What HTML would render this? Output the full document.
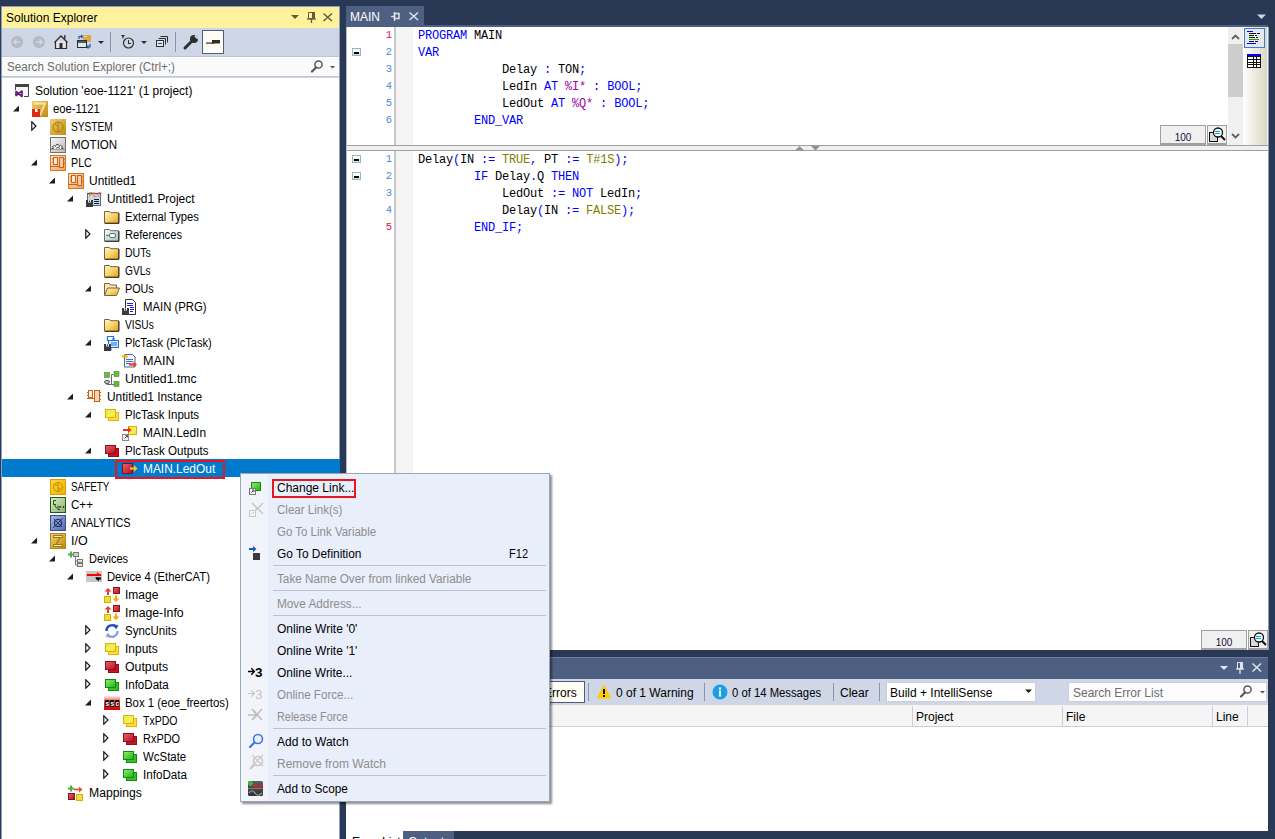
<!DOCTYPE html><html><head><meta charset="utf-8"><style>
*{margin:0;padding:0;box-sizing:border-box}
html,body{width:1275px;height:839px;overflow:hidden;background:#293955;font-family:"Liberation Sans",sans-serif;font-size:12px;color:#000}
div,svg{position:absolute}
.t{white-space:pre;line-height:18px;height:18px}
.m{font-family:"Liberation Mono",monospace;font-size:12px;letter-spacing:-0.2px;white-space:pre;line-height:17px;height:17px}
.ln{font-family:"Liberation Sans",sans-serif;font-size:11px;white-space:pre;line-height:17px;height:17px}
</style></head><body>
<div style="position:absolute;left:1px;top:6px;width:339px;height:833px;background:#8F9DBA"></div>
<div style="position:absolute;left:2px;top:7px;width:337px;height:21px;background:#FFF29D"></div>
<div class="t" style="left:6px;top:9px">Solution Explorer</div>
<div style="position:absolute;left:2px;top:28px;width:337px;height:28px;background:#CFD6E5"></div>
<div style="position:absolute;left:2px;top:56px;width:337px;height:22px;background:#CFD6E5"></div>
<div style="position:absolute;left:2px;top:56px;width:337px;height:1px;background:#BDC4D2"></div>
<div style="position:absolute;left:2px;top:57px;width:337px;height:19px;background:#FAFAFA;border-top:1px solid #FFFFFF"></div>
<div style="position:absolute;left:2px;top:76px;width:337px;height:1px;background:#BDC4D2"></div>
<div class="t" style="left:7px;top:58px;color:#6D6D6D;transform:scaleX(0.97);transform-origin:0 0">Search Solution Explorer (Ctrl+;)</div>
<div style="position:absolute;left:2px;top:78px;width:337px;height:761px;background:#FFFFFF"></div>
<svg style="left:285px;top:8px" width="55" height="20" viewBox="0 0 55 20"><path d="M6 7h8l-4 4z" fill="#6A5A32"/><path d="M23.5 4.5h6v6h-6z" fill="none" stroke="#6A5A32" stroke-width="1"/><rect x="27" y="4" width="2.5" height="7" fill="#6A5A32"/><path d="M22 11h9" stroke="#6A5A32" stroke-width="1.3"/><path d="M26.5 11v4" stroke="#6A5A32" stroke-width="1.3"/><path d="M38.5 5.5l8.5 7.5M47 5.5l-8.5 7.5" stroke="#6A5A32" stroke-width="1.5"/></svg>
<svg style="left:2px;top:28px" width="337" height="28" viewBox="2 28 337 28"><circle cx="17" cy="42" r="6" fill="#B4BAC5"/><path d="M20 42h-6M16.5 39.5L14 42l2.5 2.5" stroke="#CFD6E5" stroke-width="1.6" fill="none"/><circle cx="39" cy="42" r="6" fill="#B4BAC5"/><path d="M36 42h6M39.5 39.5L42 42l-2.5 2.5" stroke="#CFD6E5" stroke-width="1.6" fill="none"/><path d="M55.5 41.5v7h11v-7" stroke="#2D2D2D" stroke-width="1.2" fill="#E4E4EC"/><path d="M54.5 42.5l6.5-6.5 6.5 6.5" stroke="#2D2D2D" stroke-width="1.4" fill="none"/><rect x="59.5" y="43" width="3" height="5.5" fill="#2D2D2D"/><path d="M64.8 35v4" stroke="#2D2D2D" stroke-width="1.3"/><rect x="83" y="35" width="8" height="7" fill="#DCA84A"/><rect x="84" y="36" width="3" height="1" fill="#F0D8A0"/><rect x="77.5" y="40.5" width="9" height="7" fill="#E0E4EE" stroke="#2D2D2D"/><path d="M77.5 42h9" stroke="#2D2D2D" stroke-width="1.5"/><path d="M79 39v-2.5h3M81 35l1.5 1.5L81 38" stroke="#1E5BAA" stroke-width="1.2" fill="none"/><path d="M90 44v3h-3M88.5 45.5L87 47l1.5 1.5" stroke="#1E5BAA" stroke-width="1.2" fill="none"/><path d="M98 41h6l-3 3z" fill="#1E2D4A"/><rect x="110" y="32" width="1" height="20" fill="#8A93A8"/><circle cx="128.5" cy="43" r="5" fill="none" stroke="#2D2D2D" stroke-width="1.2"/><path d="M128.5 40v3.5h2.5" stroke="#2D2D2D" stroke-width="1.1" fill="none"/><path d="M121 35h4l-2 2.5z" fill="#2D2D2D"/><path d="M123 36.5v2" stroke="#2D2D2D"/><path d="M141 41h6l-3 3z" fill="#1E2D4A"/><rect x="156.5" y="40.5" width="7" height="6" fill="#E8E8EE" stroke="#2D2D2D"/><path d="M158.5 38.5h7v6M160.5 36.5h7v6" stroke="#2D2D2D" fill="none"/><path d="M158 43.5h4" stroke="#1E5BAA" stroke-width="1.2"/><rect x="175" y="32" width="1" height="20" fill="#8A93A8"/><path d="M185 48l7-7" stroke="#2D2D2D" stroke-width="3" stroke-linecap="round"/><circle cx="194" cy="39" r="4" fill="#2D2D2D"/><path d="M195 35.5l3 3" stroke="#CFD6E5" stroke-width="2.2"/><rect x="202.5" y="30.5" width="21" height="23" fill="#FFFCF4" stroke="#4B5E80"/><rect x="212" y="40" width="8" height="3.5" fill="#2D2D2D"/><rect x="206" y="42.5" width="8" height="1.2" fill="#2D2D2D"/></svg>
<svg style="left:308px;top:58px" width="30" height="18" viewBox="0 0 30 18"><circle cx="10.5" cy="6.5" r="3.6" fill="none" stroke="#555" stroke-width="1.5"/><path d="M8 9.5l-4 4" stroke="#555" stroke-width="2.2" stroke-linecap="round"/><path d="M22 8h5l-2.5 2.5z" fill="#555"/></svg>
<svg width="0" height="0" style="left:0;top:0"><defs><linearGradient id="gfold" x1="0" y1="0" x2="1" y2="1"><stop offset="0" stop-color="#FFF6C8"/><stop offset="0.5" stop-color="#F8D46A"/><stop offset="1" stop-color="#E0A020"/></linearGradient><linearGradient id="ggold" x1="0" y1="0" x2="1" y2="1"><stop offset="0" stop-color="#F0D070"/><stop offset="1" stop-color="#C08A10"/></linearGradient><linearGradient id="ggray" x1="0" y1="0" x2="1" y2="1"><stop offset="0" stop-color="#FAFAFA"/><stop offset="1" stop-color="#B8B8B8"/></linearGradient><linearGradient id="gorange" x1="0" y1="0" x2="1" y2="1"><stop offset="0" stop-color="#FCE6CC"/><stop offset="1" stop-color="#EFA060"/></linearGradient><linearGradient id="gyel" x1="0" y1="0" x2="1" y2="1"><stop offset="0" stop-color="#D8F030"/><stop offset="0.6" stop-color="#F4F060"/><stop offset="1" stop-color="#F8D840"/></linearGradient><linearGradient id="gred" x1="0" y1="0" x2="1" y2="1"><stop offset="0" stop-color="#F06070"/><stop offset="1" stop-color="#B01020"/></linearGradient><linearGradient id="ggreen" x1="0" y1="0" x2="1" y2="1"><stop offset="0" stop-color="#90F070"/><stop offset="1" stop-color="#20B010"/></linearGradient><linearGradient id="gcpp" x1="0" y1="0" x2="1" y2="1"><stop offset="0" stop-color="#E0ECC0"/><stop offset="1" stop-color="#90B070"/></linearGradient><linearGradient id="gana" x1="0" y1="0" x2="1" y2="1"><stop offset="0" stop-color="#A8B8E8"/><stop offset="1" stop-color="#5068B0"/></linearGradient><linearGradient id="gsafe" x1="0" y1="0" x2="1" y2="1"><stop offset="0" stop-color="#FFD840"/><stop offset="1" stop-color="#F0B000"/></linearGradient><linearGradient id="gscope" x1="0" y1="0" x2="0" y2="1"><stop offset="0" stop-color="#606060"/><stop offset="1" stop-color="#303030"/></linearGradient></defs></svg>
<div style="left:15px;top:83px;width:16px;height:16px"><svg width="16" height="16" viewBox="0 0 16 16"><rect x="0" y="1" width="14" height="3" fill="#424242"/><rect x="1" y="4" width="12" height="9" fill="#F6F6F6"/><path d="M0.5 4v3M13.5 4v9.5H9" stroke="#424242" fill="none"/><path d="M1 8.5L7 13.5V8L1 12.5Z" fill="none" stroke="#68217A" stroke-width="1.7" stroke-linejoin="round"/></svg></div>
<div class="t" style="left:35px;top:82px;color:#000;transform:scaleX(0.993);transform-origin:0 0">Solution 'eoe-1121' (1 project)</div>
<svg style="left:13px;top:105px" width="7" height="7" viewBox="0 0 7 7"><path d="M6 0.5V6.5H0z" fill="#1E1E1E"/></svg>
<div style="left:32px;top:101px;width:16px;height:16px"><svg width="16" height="16" viewBox="0 0 16 16"><rect x="0" y="0" width="16" height="16" fill="url(#ggold)"/><path d="M2 2.5h11l-5 12" fill="none" stroke="#F6E6A8" stroke-width="1.8"/><rect x="0" y="8" width="8" height="8" fill="#E02A10"/><rect x="3" y="8" width="2.5" height="3" fill="#FFF"/></svg></div>
<div class="t" style="left:53px;top:100px;color:#000;transform:scaleX(0.94);transform-origin:0 0">eoe-1121</div>
<svg style="left:31px;top:121px" width="6" height="10" viewBox="0 0 6 10"><path d="M0.75 0.75L5 5L0.75 9.25z" fill="#fff" stroke="#1E1E1E" stroke-width="1.2"/></svg>
<div style="left:50px;top:119px;width:16px;height:16px"><svg width="16" height="16" viewBox="0 0 16 16"><rect x="0" y="0" width="16" height="16" fill="url(#ggold)"/><circle cx="8" cy="8" r="5" fill="none" stroke="#A87A10" stroke-width="1"/><path d="M8 3v10M5 5l2 2" stroke="#A87A10"/></svg></div>
<div class="t" style="left:71px;top:118px;color:#000;transform:scaleX(0.847);transform-origin:0 0">SYSTEM</div>
<div style="left:50px;top:137px;width:16px;height:16px"><svg width="16" height="16" viewBox="0 0 16 16"><rect x="0.5" y="0.5" width="15" height="15" fill="url(#ggray)" stroke="#707070"/><path d="M1.5 11.5h2l-1-2 2-1 1 1 1-2h2l1 2 1-1 2 1-1 2h2" fill="#F4F4F4" stroke="#404040" stroke-width="0.9"/><path d="M6.5 11.5a1.5 1.2 0 0 1 3 0" fill="none" stroke="#404040" stroke-width="0.9"/><path d="M1 12.5h14" stroke="#A0A0A0"/></svg></div>
<div class="t" style="left:71px;top:136px;color:#000;transform:scaleX(0.962);transform-origin:0 0">MOTION</div>
<svg style="left:31px;top:159px" width="7" height="7" viewBox="0 0 7 7"><path d="M6 0.5V6.5H0z" fill="#1E1E1E"/></svg>
<div style="left:50px;top:155px;width:16px;height:16px"><svg width="16" height="16" viewBox="0 0 16 16"><rect x="0" y="0" width="16" height="16" fill="#D9731C"/><rect x="1" y="1" width="14" height="14" fill="url(#gorange)"/><rect x="3.5" y="2.5" width="4" height="7" fill="#FCEBD8" stroke="#C8641A"/><rect x="9.5" y="2.5" width="4" height="10" fill="#F6C89A" stroke="#C8641A"/><path d="M1 11.5h8" stroke="#C8641A"/><path d="M2 4h1M2 7h1M14 4h1M14 8h1" stroke="#C8641A"/></svg></div>
<div class="t" style="left:71px;top:154px;color:#000;transform:scaleX(0.891);transform-origin:0 0">PLC</div>
<svg style="left:49px;top:177px" width="7" height="7" viewBox="0 0 7 7"><path d="M6 0.5V6.5H0z" fill="#1E1E1E"/></svg>
<div style="left:68px;top:173px;width:16px;height:16px"><svg width="16" height="16" viewBox="0 0 16 16"><rect x="0" y="0" width="16" height="16" fill="#D9731C"/><rect x="1" y="1" width="14" height="14" fill="url(#gorange)"/><rect x="3.5" y="2.5" width="4" height="7" fill="#FCEBD8" stroke="#C8641A"/><rect x="9.5" y="2.5" width="4" height="10" fill="#F6C89A" stroke="#C8641A"/><path d="M1 11.5h8" stroke="#C8641A"/><path d="M2 4h1M2 7h1M14 4h1M14 8h1" stroke="#C8641A"/></svg></div>
<div class="t" style="left:89px;top:172px;color:#000;transform:scaleX(0.998);transform-origin:0 0">Untitled1</div>
<svg style="left:67px;top:195px" width="7" height="7" viewBox="0 0 7 7"><path d="M6 0.5V6.5H0z" fill="#1E1E1E"/></svg>
<div style="left:86px;top:191px;width:16px;height:16px"><svg width="16" height="16" viewBox="0 0 16 16"><rect x="1.5" y="2.5" width="13" height="12" fill="#C8D8F0" stroke="#4A6A9A"/><path d="M1.5 2.5h13" stroke="#2040E0" stroke-width="1.2"/><text x="3" y="5.5" font-size="6.5" font-family="Liberation Sans" font-weight="bold" fill="#F08A00">PLC</text><path d="M8 8.5h5M8 10.5h5M8 12.5h5" stroke="#1A1A1A" stroke-width="1.1"/><rect x="0" y="9" width="7" height="7" fill="#3A3A3A"/><rect x="2" y="9" width="3" height="2.5" fill="#E8E8E8"/><rect x="3" y="9.5" width="1" height="1.5" fill="#3A3A3A"/></svg></div>
<div class="t" style="left:107px;top:190px;color:#000;transform:scaleX(0.994);transform-origin:0 0">Untitled1 Project</div>
<div style="left:104px;top:209px;width:16px;height:16px"><svg width="16" height="16" viewBox="0 0 16 16"><path d="M0.5 2.5h5l1 1.2h8v10.5H0.5z" fill="url(#gfold)" stroke="#7A6040"/><path d="M15 4v10.3H1" stroke="#3A2A10" fill="none"/></svg></div>
<div class="t" style="left:125px;top:208px;color:#000;transform:scaleX(0.934);transform-origin:0 0">External Types</div>
<svg style="left:85px;top:229px" width="6" height="10" viewBox="0 0 6 10"><path d="M0.75 0.75L5 5L0.75 9.25z" fill="#fff" stroke="#1E1E1E" stroke-width="1.2"/></svg>
<div style="left:104px;top:227px;width:16px;height:16px"><svg width="16" height="16" viewBox="0 0 16 16"><path d="M0.5 2.5h5l1 1.2h8v10.5H0.5z" fill="url(#ggray)" stroke="#6A6A6A"/><path d="M15 4v10.3H1" stroke="#2A2A2A" fill="none"/><rect x="5.5" y="6.5" width="6" height="4" rx="1.5" fill="#fff" stroke="#3A7A8A"/><path d="M2 8.5h3.5" stroke="#3A9A8A" stroke-width="1.2"/></svg></div>
<div class="t" style="left:125px;top:226px;color:#000;transform:scaleX(0.928);transform-origin:0 0">References</div>
<div style="left:104px;top:245px;width:16px;height:16px"><svg width="16" height="16" viewBox="0 0 16 16"><path d="M0.5 2.5h5l1 1.2h8v10.5H0.5z" fill="url(#gfold)" stroke="#7A6040"/><path d="M15 4v10.3H1" stroke="#3A2A10" fill="none"/></svg></div>
<div class="t" style="left:125px;top:244px;color:#000;transform:scaleX(0.879);transform-origin:0 0">DUTs</div>
<div style="left:104px;top:263px;width:16px;height:16px"><svg width="16" height="16" viewBox="0 0 16 16"><path d="M0.5 2.5h5l1 1.2h8v10.5H0.5z" fill="url(#gfold)" stroke="#7A6040"/><path d="M15 4v10.3H1" stroke="#3A2A10" fill="none"/></svg></div>
<div class="t" style="left:125px;top:262px;color:#000;transform:scaleX(0.85);transform-origin:0 0">GVLs</div>
<svg style="left:85px;top:285px" width="7" height="7" viewBox="0 0 7 7"><path d="M6 0.5V6.5H0z" fill="#1E1E1E"/></svg>
<div style="left:104px;top:281px;width:16px;height:16px"><svg width="16" height="16" viewBox="0 0 16 16"><path d="M0.5 14V2.5h5l1 1.5h6v3" fill="#FCEAB0" stroke="#7A6040"/><path d="M0.5 14.5l3-7.5h12l-3 7.5z" fill="url(#gfold)" stroke="#7A6040"/></svg></div>
<div class="t" style="left:125px;top:280px;color:#000;transform:scaleX(0.897);transform-origin:0 0">POUs</div>
<div style="left:122px;top:299px;width:16px;height:16px"><svg width="16" height="16" viewBox="0 0 16 16"><path d="M3.5 0.5h7l3 3v12h-10z" fill="#fff" stroke="#333"/><g shape-rendering="crispEdges" fill="#1A1AF0"><rect x="5" y="4" width="6" height="1"/><rect x="5" y="6" width="6" height="1"/><rect x="8" y="8" width="4" height="1"/><rect x="8" y="10" width="4" height="1"/><rect x="8" y="12" width="3" height="1"/></g><rect x="0" y="9" width="7" height="7" fill="#3A3A3A"/><rect x="2" y="9" width="3" height="2.5" fill="#E8E8E8"/><rect x="3" y="9.5" width="1" height="1.5" fill="#3A3A3A"/></svg></div>
<div class="t" style="left:143px;top:298px;color:#000;transform:scaleX(0.945);transform-origin:0 0">MAIN (PRG)</div>
<div style="left:104px;top:317px;width:16px;height:16px"><svg width="16" height="16" viewBox="0 0 16 16"><path d="M0.5 2.5h5l1 1.2h8v10.5H0.5z" fill="url(#gfold)" stroke="#7A6040"/><path d="M15 4v10.3H1" stroke="#3A2A10" fill="none"/></svg></div>
<div class="t" style="left:125px;top:316px;color:#000;transform:scaleX(0.844);transform-origin:0 0">VISUs</div>
<svg style="left:85px;top:339px" width="7" height="7" viewBox="0 0 7 7"><path d="M6 0.5V6.5H0z" fill="#1E1E1E"/></svg>
<div style="left:104px;top:335px;width:16px;height:16px"><svg width="16" height="16" viewBox="0 0 16 16"><path d="M3.5 6V1.5h6v3" stroke="#1A70E0" stroke-width="1.2" fill="none"/><path d="M7.5 3.5l2 2 2-2" fill="#1A70E0"/><rect x="4.5" y="5.5" width="10" height="7" fill="#D8E8FF" stroke="#1A70E0"/><path d="M7 8h6M7 10h6" stroke="#1A70E0" stroke-width="1.1"/><path d="M7 12.5v3" stroke="#1A70E0"/><rect x="0" y="9" width="7" height="7" fill="#3A3A3A"/><rect x="2" y="9" width="3" height="2.5" fill="#E8E8E8"/><rect x="3" y="9.5" width="1" height="1.5" fill="#3A3A3A"/></svg></div>
<div class="t" style="left:125px;top:334px;color:#000;transform:scaleX(0.922);transform-origin:0 0">PlcTask (PlcTask)</div>
<div style="left:122px;top:353px;width:16px;height:16px"><svg width="16" height="16" viewBox="0 0 16 16"><path d="M2.5 1.5h8l2.5 2.5v10h-10.5z" fill="#F4F8FC" stroke="#4A6A8A"/><g shape-rendering="crispEdges" fill="#3A70D0"><rect x="4" y="6" width="7" height="1"/><rect x="4" y="8" width="7" height="1"/><rect x="4" y="10" width="5" height="1"/></g><path d="M0 3.5h4" stroke="#F5B800" stroke-width="2.2"/><path d="M3.5 1l2.5 2.5-2.5 2.5z" fill="#F5B800"/><path d="M7 11.5h5" stroke="#E84030" stroke-width="2.2"/><path d="M11.5 8.5l3.5 3-3.5 3z" fill="#E84030"/></svg></div>
<div class="t" style="left:143px;top:352px;color:#000;transform:scaleX(1.052);transform-origin:0 0">MAIN</div>
<div style="left:104px;top:371px;width:16px;height:16px"><svg width="16" height="16" viewBox="0 0 16 16"><rect x="0.5" y="1.5" width="5" height="5" fill="#6CB840" stroke="#4A8A2A" stroke-width="0.6"/><rect x="10" y="0.5" width="5" height="5" fill="#6CB840" stroke="#4A8A2A" stroke-width="0.6"/><rect x="10" y="10.5" width="5" height="5" fill="#6CB840" stroke="#4A8A2A" stroke-width="0.6"/><path d="M7.5 3.5h2M7.5 3.5v10h2.5M2.5 13.5h5" stroke="#6A6A6A" fill="none"/><ellipse cx="3" cy="11" rx="2.5" ry="1.5" fill="#ddd" stroke="#444"/></svg></div>
<div class="t" style="left:125px;top:370px;color:#000;transform:scaleX(1.024);transform-origin:0 0">Untitled1.tmc</div>
<svg style="left:67px;top:393px" width="7" height="7" viewBox="0 0 7 7"><path d="M6 0.5V6.5H0z" fill="#1E1E1E"/></svg>
<div style="left:86px;top:389px;width:16px;height:16px"><svg width="16" height="16" viewBox="0 0 16 16"><rect x="2.5" y="1.5" width="4" height="7" fill="#FCEEDC" stroke="#C8641A"/><rect x="8.5" y="1.5" width="5" height="11" fill="#F6D2B0" stroke="#C8641A"/><path d="M1 9.5h7.5M1 3.5h1.5M1 6.5h1.5M13.5 3.5h1.5M13.5 6.5h1.5M13.5 10.5h1.5" stroke="#C8641A"/></svg></div>
<div class="t" style="left:107px;top:388px;color:#000;transform:scaleX(0.99);transform-origin:0 0">Untitled1 Instance</div>
<svg style="left:85px;top:411px" width="7" height="7" viewBox="0 0 7 7"><path d="M6 0.5V6.5H0z" fill="#1E1E1E"/></svg>
<div style="left:104px;top:407px;width:16px;height:16px"><svg width="16" height="16" viewBox="0 0 16 16"><rect x="4.5" y="5.5" width="10" height="8" fill="#F8E040" stroke="#E8B000"/><rect x="1.5" y="2.5" width="10" height="8" fill="url(#gyel)" stroke="#E8B000"/></svg></div>
<div class="t" style="left:125px;top:406px;color:#000;transform:scaleX(0.958);transform-origin:0 0">PlcTask Inputs</div>
<div style="left:122px;top:425px;width:16px;height:16px"><svg width="16" height="16" viewBox="0 0 16 16"><rect x="6.5" y="1.5" width="8" height="8" fill="url(#gyel)" stroke="#E0B000"/><path d="M1 5h6" stroke="#F03020" stroke-width="2"/><path d="M6 2l3.5 3-3.5 3z" fill="#F03020"/><rect x="0.5" y="9.5" width="6" height="6" fill="#F4F4F4" stroke="#888"/><path d="M2.5 13.5l3-3M3.5 10.5h2v2" stroke="#555" fill="none"/></svg></div>
<div class="t" style="left:143px;top:424px;color:#000;transform:scaleX(0.995);transform-origin:0 0">MAIN.LedIn</div>
<svg style="left:85px;top:447px" width="7" height="7" viewBox="0 0 7 7"><path d="M6 0.5V6.5H0z" fill="#1E1E1E"/></svg>
<div style="left:104px;top:443px;width:16px;height:16px"><svg width="16" height="16" viewBox="0 0 16 16"><rect x="4.5" y="5.5" width="10" height="8" fill="#C81028" stroke="#901018"/><rect x="1.5" y="2.5" width="10" height="8" fill="url(#gred)" stroke="#901018"/></svg></div>
<div class="t" style="left:125px;top:442px;color:#000;transform:scaleX(0.964);transform-origin:0 0">PlcTask Outputs</div>
<div style="position:absolute;left:2px;top:459px;width:338px;height:18px;background:#007ACC"></div>
<div style="left:122px;top:461px;width:16px;height:16px"><svg width="16" height="16" viewBox="0 0 16 16"><rect x="0.5" y="2.5" width="10" height="10" fill="url(#gred)" stroke="#801018"/><path d="M8 7.5h5" stroke="#F8C020" stroke-width="2.2"/><path d="M12 4l3.5 3.5L12 11z" fill="#F8C020"/></svg></div>
<div class="t" style="left:143px;top:460px;color:#FFFFFF;transform:scaleX(0.993);transform-origin:0 0">MAIN.LedOut</div>
<div style="position:absolute;left:115px;top:460px;width:110px;height:19px;border:2px solid #E8161E"></div>
<div style="left:50px;top:479px;width:16px;height:16px"><svg width="16" height="16" viewBox="0 0 16 16"><rect x="0.5" y="0.5" width="15" height="15" fill="url(#gsafe)" stroke="#E09A00"/><circle cx="8" cy="8" r="4.5" fill="none" stroke="#C88A00" stroke-width="1"/><path d="M8 3.5v9M5 6h3M8 10h3" stroke="#C88A00"/></svg></div>
<div class="t" style="left:71px;top:478px;color:#000;transform:scaleX(0.823);transform-origin:0 0">SAFETY</div>
<div style="left:50px;top:497px;width:16px;height:16px"><svg width="16" height="16" viewBox="0 0 16 16"><rect x="0.5" y="0.5" width="15" height="15" fill="url(#gcpp)" stroke="#1A5A1A"/><path d="M6 3.5H3.5v4H6M4 7.5l3 4M9 10h2M10 9v2M12.5 10h2M13.5 9v2" stroke="#1A5A1A" fill="none"/><path d="M8 8.5v4h2" stroke="#1A5A1A" fill="none"/></svg></div>
<div class="t" style="left:71px;top:496px;color:#000;transform:scaleX(0.965);transform-origin:0 0">C++</div>
<div style="left:50px;top:515px;width:16px;height:16px"><svg width="16" height="16" viewBox="0 0 16 16"><rect x="0.5" y="0.5" width="15" height="15" fill="url(#gana)" stroke="#3A4A8A"/><circle cx="8" cy="8" r="3.5" fill="none" stroke="#1A2A5A" stroke-width="1.2"/><path d="M3 13l10-10M4 4l8 8" stroke="#1A2A5A" stroke-width="0.9"/></svg></div>
<div class="t" style="left:71px;top:514px;color:#000;transform:scaleX(0.906);transform-origin:0 0">ANALYTICS</div>
<svg style="left:31px;top:537px" width="7" height="7" viewBox="0 0 7 7"><path d="M6 0.5V6.5H0z" fill="#1E1E1E"/></svg>
<div style="left:50px;top:533px;width:16px;height:16px"><svg width="16" height="16" viewBox="0 0 16 16"><rect x="0.5" y="0.5" width="15" height="15" fill="url(#ggold)" stroke="#B08A20"/><rect x="3.5" y="2.5" width="9" height="2" fill="#F8E8B0" stroke="#A07A10"/><rect x="3.5" y="11.5" width="9" height="2" fill="#F8E8B0" stroke="#A07A10"/><path d="M10 5l-4 6" stroke="#A07A10" stroke-width="1.2"/></svg></div>
<div class="t" style="left:71px;top:532px;color:#000;transform:scaleX(1.037);transform-origin:0 0">I/O</div>
<svg style="left:49px;top:555px" width="7" height="7" viewBox="0 0 7 7"><path d="M6 0.5V6.5H0z" fill="#1E1E1E"/></svg>
<div style="left:68px;top:551px;width:16px;height:16px"><svg width="16" height="16" viewBox="0 0 16 16"><rect x="5.5" y="1.5" width="5" height="4" fill="#D0D0D0" stroke="#777"/><rect x="9.5" y="8.5" width="5" height="3" fill="#E0E0E0" stroke="#777"/><rect x="9.5" y="12.5" width="5" height="3" fill="#E0E0E0" stroke="#777"/><path d="M7.5 5.5v8.5h2M7.5 10h2" stroke="#777" fill="none"/><path d="M0 3.5h6M3 0.5v6" stroke="#4CB04A" stroke-width="2"/></svg></div>
<div class="t" style="left:89px;top:550px;color:#000;transform:scaleX(0.916);transform-origin:0 0">Devices</div>
<svg style="left:67px;top:573px" width="7" height="7" viewBox="0 0 7 7"><path d="M6 0.5V6.5H0z" fill="#1E1E1E"/></svg>
<div style="left:86px;top:569px;width:16px;height:16px"><svg width="16" height="16" viewBox="0 0 16 16"><rect x="0" y="2" width="16" height="11" fill="#C8C8C8"/><path d="M1 6h14" stroke="#FF0000" stroke-width="2"/><path d="M11 3l4.5 4H11z" fill="#FF0000"/><path d="M15 9.5H10" stroke="#000" stroke-width="2"/><path d="M9 8.5l4 0 0 4z" fill="#000"/></svg></div>
<div class="t" style="left:107px;top:568px;color:#000;transform:scaleX(0.937);transform-origin:0 0">Device 4 (EtherCAT)</div>
<div style="left:104px;top:587px;width:16px;height:16px"><svg width="16" height="16" viewBox="0 0 16 16"><rect x="9.5" y="0.5" width="6" height="6" fill="url(#gred)" stroke="#901018"/><rect x="0.5" y="9.5" width="6" height="6" fill="#F0DC40" stroke="#D0B000"/><path d="M4 8V3.5" stroke="#F03A2A" stroke-width="2"/><path d="M0.5 4.5L4 1l3.5 3.5z" fill="#F03A2A"/><path d="M12 8.5v4" stroke="#F5A800" stroke-width="2"/><path d="M8.5 11.5l3.5 3.5 3.5-3.5z" fill="#F5A800"/></svg></div>
<div class="t" style="left:125px;top:586px;color:#000;transform:scaleX(1.0);transform-origin:0 0">Image</div>
<div style="left:104px;top:605px;width:16px;height:16px"><svg width="16" height="16" viewBox="0 0 16 16"><rect x="9.5" y="0.5" width="6" height="6" fill="url(#gred)" stroke="#901018"/><rect x="0.5" y="9.5" width="6" height="6" fill="#F0DC40" stroke="#D0B000"/><path d="M4 8V3.5" stroke="#F03A2A" stroke-width="2"/><path d="M0.5 4.5L4 1l3.5 3.5z" fill="#F03A2A"/><path d="M12 8.5v4" stroke="#F5A800" stroke-width="2"/><path d="M8.5 11.5l3.5 3.5 3.5-3.5z" fill="#F5A800"/></svg></div>
<div class="t" style="left:125px;top:604px;color:#000;transform:scaleX(1.023);transform-origin:0 0">Image-Info</div>
<svg style="left:85px;top:625px" width="6" height="10" viewBox="0 0 6 10"><path d="M0.75 0.75L5 5L0.75 9.25z" fill="#fff" stroke="#1E1E1E" stroke-width="1.2"/></svg>
<div style="left:104px;top:623px;width:16px;height:16px"><svg width="16" height="16" viewBox="0 0 16 16"><path d="M2.5 8a5.5 5.5 0 0 1 9.5-4" stroke="#2A4FB8" stroke-width="2.4" fill="none"/><path d="M9.5 1l5 1.5-2.5 4z" fill="#2A4FB8"/><path d="M13.5 8a5.5 5.5 0 0 1-9.5 4" stroke="#8AA4E0" stroke-width="2.4" fill="none"/><path d="M6.5 15l-5-1.5 2.5-4z" fill="#8AA4E0"/></svg></div>
<div class="t" style="left:125px;top:622px;color:#000;transform:scaleX(0.957);transform-origin:0 0">SyncUnits</div>
<svg style="left:85px;top:643px" width="6" height="10" viewBox="0 0 6 10"><path d="M0.75 0.75L5 5L0.75 9.25z" fill="#fff" stroke="#1E1E1E" stroke-width="1.2"/></svg>
<div style="left:104px;top:641px;width:16px;height:16px"><svg width="16" height="16" viewBox="0 0 16 16"><rect x="4.5" y="5.5" width="10" height="8" fill="#F8E040" stroke="#E8B000"/><rect x="1.5" y="2.5" width="10" height="8" fill="url(#gyel)" stroke="#E8B000"/></svg></div>
<div class="t" style="left:125px;top:640px;color:#000;transform:scaleX(1.0);transform-origin:0 0">Inputs</div>
<svg style="left:85px;top:661px" width="6" height="10" viewBox="0 0 6 10"><path d="M0.75 0.75L5 5L0.75 9.25z" fill="#fff" stroke="#1E1E1E" stroke-width="1.2"/></svg>
<div style="left:104px;top:659px;width:16px;height:16px"><svg width="16" height="16" viewBox="0 0 16 16"><rect x="4.5" y="5.5" width="10" height="8" fill="#C81028" stroke="#901018"/><rect x="1.5" y="2.5" width="10" height="8" fill="url(#gred)" stroke="#901018"/></svg></div>
<div class="t" style="left:125px;top:658px;color:#000;transform:scaleX(1.026);transform-origin:0 0">Outputs</div>
<svg style="left:85px;top:679px" width="6" height="10" viewBox="0 0 6 10"><path d="M0.75 0.75L5 5L0.75 9.25z" fill="#fff" stroke="#1E1E1E" stroke-width="1.2"/></svg>
<div style="left:104px;top:677px;width:16px;height:16px"><svg width="16" height="16" viewBox="0 0 16 16"><rect x="4.5" y="5.5" width="10" height="8" fill="#38C028" stroke="#108A10"/><rect x="1.5" y="2.5" width="10" height="8" fill="url(#ggreen)" stroke="#108A10"/></svg></div>
<div class="t" style="left:125px;top:676px;color:#000;transform:scaleX(0.965);transform-origin:0 0">InfoData</div>
<svg style="left:85px;top:699px" width="7" height="7" viewBox="0 0 7 7"><path d="M6 0.5V6.5H0z" fill="#1E1E1E"/></svg>
<div style="left:104px;top:695px;width:16px;height:16px"><svg width="16" height="16" viewBox="0 0 16 16"><defs><linearGradient id="gssc" x1="0" y1="0" x2="0" y2="1"><stop offset="0" stop-color="#FFF0F0"/><stop offset="0.45" stop-color="#F03030"/><stop offset="1" stop-color="#E00000"/></linearGradient></defs><rect x="0" y="1" width="16" height="14" fill="url(#gssc)"/><rect x="1" y="5" width="4.3" height="7" rx="1" fill="#111"/><rect x="6" y="5" width="4.3" height="7" rx="1" fill="#111"/><rect x="11" y="5" width="4.3" height="7" rx="1" fill="#111"/><text x="1.6" y="10.8" font-size="6.5" font-family="Liberation Sans" font-weight="bold" fill="#fff">s</text><text x="6.6" y="10.8" font-size="6.5" font-family="Liberation Sans" font-weight="bold" fill="#fff">s</text><text x="11.5" y="10.8" font-size="6.5" font-family="Liberation Sans" font-weight="bold" fill="#fff">c</text></svg></div>
<div class="t" style="left:125px;top:694px;color:#000;transform:scaleX(0.949);transform-origin:0 0">Box 1 (eoe_freertos)</div>
<svg style="left:103px;top:715px" width="6" height="10" viewBox="0 0 6 10"><path d="M0.75 0.75L5 5L0.75 9.25z" fill="#fff" stroke="#1E1E1E" stroke-width="1.2"/></svg>
<div style="left:122px;top:713px;width:16px;height:16px"><svg width="16" height="16" viewBox="0 0 16 16"><rect x="4.5" y="5.5" width="10" height="8" fill="#F8E040" stroke="#E8B000"/><rect x="1.5" y="2.5" width="10" height="8" fill="url(#gyel)" stroke="#E8B000"/></svg></div>
<div class="t" style="left:143px;top:712px;color:#000;transform:scaleX(0.879);transform-origin:0 0">TxPDO</div>
<svg style="left:103px;top:733px" width="6" height="10" viewBox="0 0 6 10"><path d="M0.75 0.75L5 5L0.75 9.25z" fill="#fff" stroke="#1E1E1E" stroke-width="1.2"/></svg>
<div style="left:122px;top:731px;width:16px;height:16px"><svg width="16" height="16" viewBox="0 0 16 16"><rect x="4.5" y="5.5" width="10" height="8" fill="#C81028" stroke="#901018"/><rect x="1.5" y="2.5" width="10" height="8" fill="url(#gred)" stroke="#901018"/></svg></div>
<div class="t" style="left:143px;top:730px;color:#000;transform:scaleX(0.912);transform-origin:0 0">RxPDO</div>
<svg style="left:103px;top:751px" width="6" height="10" viewBox="0 0 6 10"><path d="M0.75 0.75L5 5L0.75 9.25z" fill="#fff" stroke="#1E1E1E" stroke-width="1.2"/></svg>
<div style="left:122px;top:749px;width:16px;height:16px"><svg width="16" height="16" viewBox="0 0 16 16"><rect x="4.5" y="5.5" width="10" height="8" fill="#38C028" stroke="#108A10"/><rect x="1.5" y="2.5" width="10" height="8" fill="url(#ggreen)" stroke="#108A10"/></svg></div>
<div class="t" style="left:143px;top:748px;color:#000;transform:scaleX(0.953);transform-origin:0 0">WcState</div>
<svg style="left:103px;top:769px" width="6" height="10" viewBox="0 0 6 10"><path d="M0.75 0.75L5 5L0.75 9.25z" fill="#fff" stroke="#1E1E1E" stroke-width="1.2"/></svg>
<div style="left:122px;top:767px;width:16px;height:16px"><svg width="16" height="16" viewBox="0 0 16 16"><rect x="4.5" y="5.5" width="10" height="8" fill="#38C028" stroke="#108A10"/><rect x="1.5" y="2.5" width="10" height="8" fill="url(#ggreen)" stroke="#108A10"/></svg></div>
<div class="t" style="left:143px;top:766px;color:#000;transform:scaleX(0.97);transform-origin:0 0">InfoData</div>
<div style="left:68px;top:785px;width:16px;height:16px"><svg width="16" height="16" viewBox="0 0 16 16"><rect x="0.5" y="8.5" width="6" height="6" fill="url(#gred)" stroke="#901018"/><rect x="8.5" y="9.5" width="6" height="6" fill="#F0DC40" stroke="#D0B000"/><path d="M0 3.5h6M3 0.5v6" stroke="#4CB04A" stroke-width="2"/><path d="M6 4.5h6" stroke="#F04A2A" stroke-width="1.8"/><path d="M11 1.5l3.5 3-3.5 3z" fill="#F04A2A"/></svg></div>
<div class="t" style="left:89px;top:784px;color:#000;transform:scaleX(1.017);transform-origin:0 0">Mappings</div>
<div style="position:absolute;left:346px;top:6px;width:78px;height:21px;background:#4D6082"></div>
<div class="t" style="left:350px;top:8px;color:#FFFFFF">MAIN</div>
<div style="position:absolute;left:346px;top:25px;width:922px;height:2px;background:#4D6082"></div>
<div style="position:absolute;left:346px;top:27px;width:922px;height:118px;background:#FFFFFF"></div>
<div style="position:absolute;left:346px;top:151px;width:922px;height:499px;background:#FFFFFF"></div>
<div style="position:absolute;left:346px;top:145px;width:922px;height:6px;background:#F0F0F0;border-top:1px solid #A0A0A0;border-bottom:1px solid #A0A0A0;border-left:1px solid #A0A0A0"></div>
<div style="position:absolute;left:394px;top:27px;width:2px;height:118px;background:#C8C8C8"></div>
<div style="position:absolute;left:396px;top:27px;width:17px;height:118px;background:#F5F5F5"></div>
<div style="position:absolute;left:394px;top:151px;width:2px;height:499px;background:#C8C8C8"></div>
<div style="position:absolute;left:396px;top:151px;width:17px;height:499px;background:#F5F5F5"></div>
<div class="m" style="left:369px;top:27px;width:23px;text-align:right;color:#D0203A;font-size:10.5px;letter-spacing:0">1</div>
<div class="m" style="left:418px;top:28px;color:#000"><span style="color:#0000FF">PROGRAM</span> MAIN</div>
<div class="m" style="left:369px;top:44px;width:23px;text-align:right;color:#4A8AD0;font-size:10.5px;letter-spacing:0">2</div>
<div class="m" style="left:418px;top:45px;color:#000"><span style="color:#0000FF">VAR</span></div>
<div style="left:352px;top:48px;width:9px;height:8px;border:1px solid #98B4BC;background:linear-gradient(#fff 40%,#d8d8d8)"><div style="left:1px;top:3px;width:5px;height:1.5px;background:#000"></div></div>
<div class="m" style="left:369px;top:61px;width:23px;text-align:right;color:#4A8AD0;font-size:10.5px;letter-spacing:0">3</div>
<div class="m" style="left:418px;top:62px;color:#000">            Delay <span style="color:#0000FF">:</span> TON<span style="color:#0000FF">;</span></div>
<div class="m" style="left:369px;top:78px;width:23px;text-align:right;color:#4A8AD0;font-size:10.5px;letter-spacing:0">4</div>
<div class="m" style="left:418px;top:79px;color:#000">            LedIn <span style="color:#0000FF">AT</span> <span style="color:#A000A0">%I*</span> <span style="color:#0000FF">:</span> <span style="color:#0000FF">BOOL</span><span style="color:#0000FF">;</span></div>
<div class="m" style="left:369px;top:95px;width:23px;text-align:right;color:#4A8AD0;font-size:10.5px;letter-spacing:0">5</div>
<div class="m" style="left:418px;top:96px;color:#000">            LedOut <span style="color:#0000FF">AT</span> <span style="color:#A000A0">%Q*</span> <span style="color:#0000FF">:</span> <span style="color:#0000FF">BOOL</span><span style="color:#0000FF">;</span></div>
<div class="m" style="left:369px;top:112px;width:23px;text-align:right;color:#4A8AD0;font-size:10.5px;letter-spacing:0">6</div>
<div class="m" style="left:418px;top:113px;color:#000">        <span style="color:#0000FF">END_VAR</span></div>
<div class="m" style="left:369px;top:151px;width:23px;text-align:right;color:#4A8AD0;font-size:10.5px;letter-spacing:0">1</div>
<div class="m" style="left:418px;top:152px;color:#000">Delay<span style="color:#0000FF">(</span>IN <span style="color:#0000FF">:=</span> <span style="color:#808000">TRUE</span><span style="color:#0000FF">,</span> PT <span style="color:#0000FF">:=</span> <span style="color:#808000">T#1S</span><span style="color:#0000FF">);</span></div>
<div style="left:352px;top:155px;width:9px;height:8px;border:1px solid #98B4BC;background:linear-gradient(#fff 40%,#d8d8d8)"><div style="left:1px;top:3px;width:5px;height:1.5px;background:#000"></div></div>
<div class="m" style="left:369px;top:168px;width:23px;text-align:right;color:#4A8AD0;font-size:10.5px;letter-spacing:0">2</div>
<div class="m" style="left:418px;top:169px;color:#000">        <span style="color:#0000FF">IF</span> Delay<span style="color:#0000FF">.</span>Q <span style="color:#0000FF">THEN</span></div>
<div style="left:352px;top:172px;width:9px;height:8px;border:1px solid #98B4BC;background:linear-gradient(#fff 40%,#d8d8d8)"><div style="left:1px;top:3px;width:5px;height:1.5px;background:#000"></div></div>
<div class="m" style="left:369px;top:185px;width:23px;text-align:right;color:#4A8AD0;font-size:10.5px;letter-spacing:0">3</div>
<div class="m" style="left:418px;top:186px;color:#000">            LedOut <span style="color:#0000FF">:=</span> <span style="color:#0000FF">NOT</span> LedIn<span style="color:#0000FF">;</span></div>
<div class="m" style="left:369px;top:202px;width:23px;text-align:right;color:#4A8AD0;font-size:10.5px;letter-spacing:0">4</div>
<div class="m" style="left:418px;top:203px;color:#000">            Delay<span style="color:#0000FF">(</span>IN <span style="color:#0000FF">:=</span> <span style="color:#808000">FALSE</span><span style="color:#0000FF">);</span></div>
<div class="m" style="left:369px;top:219px;width:23px;text-align:right;color:#D0203A;font-size:10.5px;letter-spacing:0">5</div>
<div class="m" style="left:418px;top:220px;color:#000">        <span style="color:#0000FF">END_IF</span><span style="color:#0000FF">;</span></div>
<svg style="left:388px;top:8px" width="36" height="16" viewBox="0 0 36 16"><path d="M3 8.5h4" stroke="#E0E4EE" stroke-width="1.3"/><rect x="6.5" y="5.5" width="4.5" height="5" fill="none" stroke="#E0E4EE" stroke-width="1.5"/><path d="M6.5 4v9" stroke="#E0E4EE" stroke-width="1.3"/><path d="M21.5 4.5l8.5 7.5M30 4.5l-8.5 7.5" stroke="#E0E4EE" stroke-width="1.5"/></svg>
<svg style="left:1256px;top:13px" width="12" height="8" viewBox="0 0 12 8"><path d="M1 1.5h9l-4.5 4.5z" fill="#CFD6E5"/></svg>
<div style="position:absolute;left:1228px;top:27px;width:15px;height:118px;background:#F0F0F0"></div>
<div style="position:absolute;left:1228px;top:44px;width:15px;height:53px;background:#CDCDCD"></div>
<svg style="left:1228px;top:27px" width="15" height="118" viewBox="0 0 15 118"><path d="M4 12l3.5-3.5L11 12" stroke="#606060" stroke-width="1.8" fill="none"/><path d="M4 107l3.5 3.5L11 107" stroke="#606060" stroke-width="1.8" fill="none"/></svg>
<div style="position:absolute;left:1243px;top:27px;width:25px;height:118px;background:linear-gradient(90deg,#FFFFFF 0%,#F4F3EA 30%,#D8D6C0 100%)"></div>
<div style="position:absolute;left:1267px;top:27px;width:1px;height:118px;background:#F0F0F0"></div>
<div style="position:absolute;left:1244px;top:28px;width:21px;height:20px;background:#E6E8F0;border:1px solid #3C7FD0"></div>
<svg style="left:1244px;top:28px" width="22" height="44" viewBox="0 0 22 44" shape-rendering="crispEdges"><rect x="3" y="3" width="6" height="1" fill="#0000FF"/><rect x="5" y="5" width="7" height="1" fill="#111"/><rect x="13" y="5" width="3" height="1" fill="#111"/><rect x="5" y="7" width="5" height="1" fill="#111"/><rect x="11" y="7" width="2" height="1" fill="#111"/><rect x="5" y="9" width="6" height="1" fill="#111"/><rect x="12" y="9" width="2" height="1" fill="#111"/><rect x="5" y="11" width="10" height="1" fill="#1A9A1A"/><rect x="5" y="13" width="5" height="1" fill="#111"/><rect x="11" y="13" width="3" height="1" fill="#111"/><rect x="3" y="15" width="9" height="1" fill="#0000FF"/><rect x="3" y="26" width="14" height="14" fill="#111"/><rect x="4" y="29" width="12" height="10" fill="#fff"/><rect x="3" y="26" width="14" height="2" fill="#0000FF"/><rect x="4" y="31" width="12" height="1" fill="#111"/><rect x="4" y="34" width="12" height="1" fill="#111"/><rect x="4" y="36" width="12" height="1" fill="#111"/><rect x="9" y="28" width="1" height="11" fill="#111"/><rect x="12" y="28" width="1" height="11" fill="#111"/></svg>
<div style="position:absolute;left:1160px;top:125px;width:46px;height:20px;background:#F0F0F0;border:1px solid #A0A0A0;border-width:1px 1px 2px 1px"></div>
<div style="left:1160px;top:131px;width:46px;text-align:center;font-size:10px;line-height:14px;color:#101040">100</div>
<div style="position:absolute;left:1207px;top:125px;width:20px;height:20px;background:#F0F0F0;border:1px solid #A0A0A0;border-width:1px 1px 2px 1px"></div>
<svg style="left:1207px;top:125px" width="20" height="19" viewBox="0 0 20 19"><rect x="2.5" y="7.5" width="8" height="9" fill="#D8D8D8" stroke="#111"/><circle cx="11" cy="7.5" r="4.5" fill="#fff" stroke="#111" stroke-width="1.3"/><path d="M8 6.5h5M8 8.5h5" stroke="#00B0D0"/><path d="M14 11l4 4" stroke="#111" stroke-width="2"/></svg>
<div style="position:absolute;left:1201px;top:630px;width:46px;height:20px;background:#F0F0F0;border:1px solid #A0A0A0;border-width:1px 1px 2px 1px"></div>
<div style="left:1201px;top:636px;width:46px;text-align:center;font-size:10px;line-height:14px;color:#101040">100</div>
<div style="position:absolute;left:1248px;top:630px;width:20px;height:20px;background:#F0F0F0;border:1px solid #A0A0A0;border-width:1px 1px 2px 1px"></div>
<svg style="left:1248px;top:630px" width="20" height="19" viewBox="0 0 20 19"><rect x="2.5" y="7.5" width="8" height="9" fill="#D8D8D8" stroke="#111"/><circle cx="11" cy="7.5" r="4.5" fill="#fff" stroke="#111" stroke-width="1.3"/><path d="M8 6.5h5M8 8.5h5" stroke="#00B0D0"/><path d="M14 11l4 4" stroke="#111" stroke-width="2"/></svg>
<svg style="left:795px;top:146px" width="26" height="5" viewBox="0 0 26 5"><path d="M0 4.5L4.5 0 9 4.5z" fill="#909090"/><path d="M16 0h9l-4.5 4.5z" fill="#909090"/></svg>
<div style="position:absolute;left:346px;top:27px;width:1px;height:623px;background:#B4BDD0"></div>
<div style="position:absolute;left:1268px;top:27px;width:1px;height:623px;background:#8F9DBA"></div>
<div style="position:absolute;left:346px;top:657px;width:922px;height:22px;background:#4D6082;border-top:1px solid #6A7C9E"></div>
<div style="position:absolute;left:346px;top:679px;width:922px;height:26px;background:#CFD6E5"></div>
<div style="position:absolute;left:346px;top:705px;width:922px;height:22px;background:#F5F5F5;border-bottom:1px solid #CCCEDB"></div>
<div style="position:absolute;left:346px;top:727px;width:922px;height:104px;background:#FFFFFF"></div>
<div style="position:absolute;left:346px;top:831px;width:57px;height:8px;background:#FFFFFF"></div>
<div style="position:absolute;left:403px;top:831px;width:51px;height:8px;background:#4D6082"></div>
<svg style="left:1212px;top:659px" width="56" height="18" viewBox="0 0 56 18"><path d="M8 7h8l-4 4z" fill="#E0E4EE"/><path d="M25.5 3.5h5v6h-5z" fill="none" stroke="#E0E4EE"/><rect x="28" y="3" width="2.5" height="7" fill="#E0E4EE"/><path d="M24 10h8" stroke="#E0E4EE" stroke-width="1.3"/><path d="M28 10v5" stroke="#E0E4EE" stroke-width="1.3"/><path d="M40.5 4.5l8.5 8M49 4.5l-8.5 8" stroke="#E0E4EE" stroke-width="1.5"/></svg>
<div style="position:absolute;left:540px;top:681px;width:45px;height:22px;background:#FFFCF4;border:1px solid #4B5E80"></div>
<div class="t" style="left:544px;top:684px;">Errors</div>
<div style="position:absolute;left:588px;top:683px;width:1px;height:18px;background:#8A93A8"></div>
<svg style="left:596px;top:684px" width="16" height="15" viewBox="0 0 16 15"><path d="M8 0.5L15.5 14.5H0.5z" fill="#FFCC00"/><rect x="7" y="5" width="2" height="5" fill="#111"/><rect x="7" y="11" width="2" height="2" fill="#111"/></svg>
<div class="t" style="left:616px;top:684px;">0 of 1 Warning</div>
<div style="position:absolute;left:704px;top:683px;width:1px;height:18px;background:#8A93A8"></div>
<svg style="left:712px;top:684px" width="16" height="16" viewBox="0 0 16 16"><circle cx="8" cy="8" r="7.5" fill="#1BA1E2"/><rect x="7" y="6.5" width="2" height="6" fill="#fff"/><rect x="7" y="3.5" width="2" height="2" fill="#fff"/></svg>
<div class="t" style="left:732px;top:684px;transform:scaleX(0.94);transform-origin:0 0">0 of 14 Messages</div>
<div style="position:absolute;left:833px;top:683px;width:1px;height:18px;background:#8A93A8"></div>
<div class="t" style="left:840px;top:684px;">Clear</div>
<div style="position:absolute;left:879px;top:683px;width:1px;height:18px;background:#8A93A8"></div>
<div style="position:absolute;left:886px;top:682px;width:150px;height:20px;background:#FFFFFF;border:1px solid #CCCEDB"></div>
<div class="t" style="left:890px;top:684px;">Build + IntelliSense</div>
<svg style="left:1025px;top:689px" width="8" height="5" viewBox="0 0 8 5"><path d="M0 0.5h7l-3.5 3.5z" fill="#1E1E1E"/></svg>
<div style="position:absolute;left:1068px;top:682px;width:199px;height:20px;background:#FCFCFC;border:1px solid #CCCEDB"></div>
<div class="t" style="left:1073px;top:684px;color:#6D6D6D">Search Error List</div>
<svg style="left:1236px;top:683px" width="34" height="18" viewBox="0 0 34 18"><circle cx="11.5" cy="6.5" r="3.6" fill="none" stroke="#555" stroke-width="1.5"/><path d="M9 9.5l-4 4" stroke="#555" stroke-width="2.2" stroke-linecap="round"/><path d="M24 8h5l-2.5 2.5z" fill="#555"/></svg>
<div style="position:absolute;left:912px;top:706px;width:1px;height:21px;background:#CCCEDB"></div>
<div style="position:absolute;left:1062px;top:706px;width:1px;height:21px;background:#CCCEDB"></div>
<div style="position:absolute;left:1212px;top:706px;width:1px;height:21px;background:#CCCEDB"></div>
<div style="position:absolute;left:1247px;top:706px;width:1px;height:21px;background:#CCCEDB"></div>
<div class="t" style="left:916px;top:708px;">Project</div>
<div class="t" style="left:1066px;top:708px;">File</div>
<div class="t" style="left:1216px;top:708px;">Line</div>
<div class="t" style="left:352px;top:833px;">Error List</div>
<div class="t" style="left:408px;top:833px;color:#fff">Output</div>
<div style="position:absolute;left:240px;top:473px;width:310px;height:329px;background:#E9EEFB;border:1px solid #9BA7B7;box-shadow:2px 2px 2px rgba(0,0,0,0.45)"></div>
<div style="position:absolute;left:241px;top:474px;width:27px;height:327px;background:#F2F4FB"></div>
<div class="t" style="left:277px;top:479px;color:#000;transform:scaleX(1.0);transform-origin:0 0">Change Link...</div>
<div class="t" style="left:277px;top:501px;color:#8D8D8D;transform:scaleX(0.961);transform-origin:0 0">Clear Link(s)</div>
<div class="t" style="left:277px;top:523px;color:#8D8D8D;transform:scaleX(0.957);transform-origin:0 0">Go To Link Variable</div>
<div class="t" style="left:277px;top:545px;color:#000;transform:scaleX(0.992);transform-origin:0 0">Go To Definition</div>
<div class="t" style="left:509px;top:545px;color:#000;transform:scaleX(0.92);transform-origin:0 0">F12</div>
<div style="position:absolute;left:273px;top:565px;width:273px;height:1px;background:#BEC3CB"></div>
<div class="t" style="left:277px;top:570px;color:#8D8D8D;transform:scaleX(0.979);transform-origin:0 0">Take Name Over from linked Variable</div>
<div style="position:absolute;left:273px;top:590px;width:273px;height:1px;background:#BEC3CB"></div>
<div class="t" style="left:277px;top:595px;color:#8D8D8D;transform:scaleX(0.982);transform-origin:0 0">Move Address...</div>
<div style="position:absolute;left:273px;top:615px;width:273px;height:1px;background:#BEC3CB"></div>
<div class="t" style="left:277px;top:620px;color:#000;transform:scaleX(1.0);transform-origin:0 0">Online Write '0'</div>
<div class="t" style="left:277px;top:642px;color:#000;transform:scaleX(1.0);transform-origin:0 0">Online Write '1'</div>
<div class="t" style="left:277px;top:664px;color:#000;transform:scaleX(0.995);transform-origin:0 0">Online Write...</div>
<div class="t" style="left:277px;top:686px;color:#8D8D8D;transform:scaleX(0.969);transform-origin:0 0">Online Force...</div>
<div class="t" style="left:277px;top:708px;color:#8D8D8D;transform:scaleX(0.908);transform-origin:0 0">Release Force</div>
<div style="position:absolute;left:273px;top:728px;width:273px;height:1px;background:#BEC3CB"></div>
<div class="t" style="left:277px;top:733px;color:#000;transform:scaleX(1.0);transform-origin:0 0">Add to Watch</div>
<div class="t" style="left:277px;top:755px;color:#8D8D8D;transform:scaleX(1.0);transform-origin:0 0">Remove from Watch</div>
<div style="position:absolute;left:273px;top:775px;width:273px;height:1px;background:#BEC3CB"></div>
<div class="t" style="left:277px;top:780px;color:#000;transform:scaleX(0.983);transform-origin:0 0">Add to Scope</div>
<div style="position:absolute;left:272px;top:479px;width:84px;height:19px;border:2px solid #E8161E"></div>
<svg style="left:241px;top:474px" width="27" height="327" viewBox="241 474 27 327"><rect x="251.5" y="482.5" width="9" height="8" fill="url(#ggreen)" stroke="#1A8A10"/><rect x="249.5" y="488.5" width="6" height="6" fill="#F4F4F4" stroke="#777"/><path d="M251.5 492.5l2.5-2.5M252 490h2v2" stroke="#444" fill="none" stroke-width="0.9"/><path d="M252 503l11 11M263 503l-9 9" stroke="#C8C8C8" stroke-width="1.6"/><rect x="249.5" y="510.5" width="6" height="6" fill="#F4F4F4" stroke="#C8C8C8"/><path d="M251.5 514.5l2.5-2.5" stroke="#C8C8C8" stroke-width="0.9"/><path d="M249 549h5" stroke="#1A5AB0" stroke-width="2"/><path d="M253 546l3.5 3-3.5 3z" fill="#1A5AB0"/><rect x="253" y="553" width="7" height="7" fill="#3A3A3A"/></svg>
<svg style="left:244px;top:662px" width="24" height="40" viewBox="244 662 24 40"><path d="M248 671.5h6.5M251.2 668.3l3.3 3.2-3.3 3.2" stroke="#000" stroke-width="1.3" fill="none"/><text x="255" y="677" font-family="Liberation Sans" font-weight="bold" font-size="13.5" fill="#000">3</text><path d="M248 693.5h6.5M251.2 690.3l3.3 3.2-3.3 3.2" stroke="#C4C4C4" stroke-width="1.1" fill="none"/><text x="255" y="699" font-family="Liberation Sans" font-size="13.5" fill="#C4C4C4">3</text></svg>
<svg style="left:241px;top:700px" width="27" height="100" viewBox="241 700 27 100"><path d="M248 715h9M254 712l3 3-3 3" stroke="#C0C0C0" stroke-width="1.3" fill="none"/><path d="M252 709l10 11M262 709l-10 11" stroke="#C0C0C0" stroke-width="1.8"/><circle cx="258" cy="739" r="4.5" fill="#E8F0FF" stroke="#3A7AE0" stroke-width="1.6"/><path d="M254.5 742.5l-4.5 4.5" stroke="#3A7AE0" stroke-width="2.2" stroke-linecap="round"/><circle cx="258" cy="761" r="4.5" fill="none" stroke="#C8C8C8" stroke-width="1.6"/><path d="M254.5 764.5l-4.5 4.5" stroke="#C8C8C8" stroke-width="2.2"/><path d="M252 755l11 11M263 755l-11 11" stroke="#C8C8C8" stroke-width="1.2"/><rect x="248" y="781" width="15" height="15" rx="1.5" fill="url(#gscope)"/><path d="M248 788.5h15" stroke="#888" stroke-width="0.8"/><path d="M253 785c2 0 3 2 4.5 2s2.5-2 5.5-2" stroke="#E02020" stroke-width="1.5" fill="none"/><path d="M249 793c2-3 4-3 6 0s4 3 7 0" stroke="#A0A0A0" stroke-width="1.2" fill="none"/><path d="M248 783.5h5M250.5 781v5" stroke="#40C040" stroke-width="1.8"/></svg>
</body></html>
